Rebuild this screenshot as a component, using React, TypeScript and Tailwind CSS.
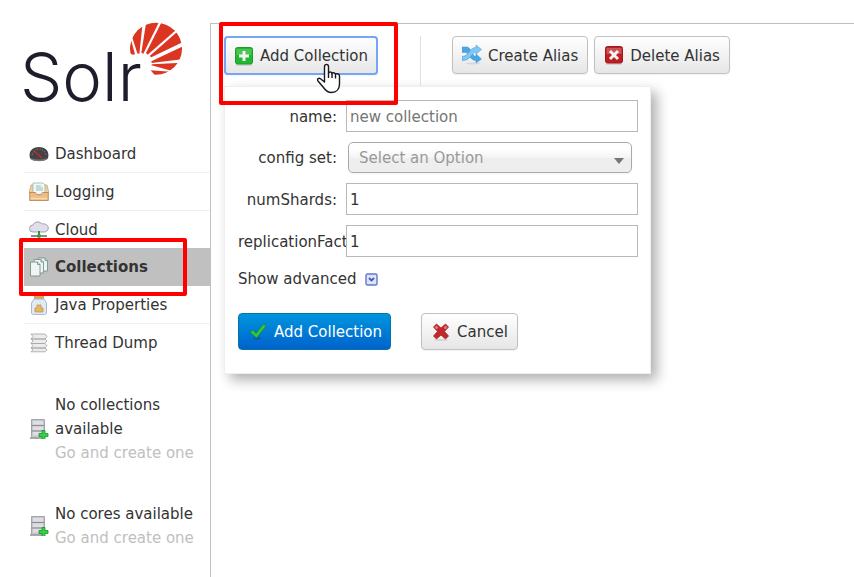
import type { ReactNode } from "react";

const font = "font-['DejaVu_Sans',Verdana,sans-serif]";

function Logo() {
  return (
    <a href="#home" aria-label="Solr" className="relative block h-24 text-[#1f1d2b]">
      <span className="-ml-1 block pt-[15px] font-['Inter',sans-serif] text-[67px] leading-[84px] font-light">Solr</span>
      <svg viewBox="0 0 180 180" className="absolute top-0 left-[102px] size-[60px]" aria-hidden="true">
        <clipPath id="disc">
          <circle cx="90" cy="86" r="78" />
        </clipPath>
        <g clipPath="url(#disc)" fill="#dc3522">
          <path d="M6 96 16 62 27 103 20 104Z" />
          <path d="M18 50 50 8 40 102 34 100Z" />
          <path d="M61 4 100 4 52 101 46 98Z" />
          <path d="M110 0 150 30 65 104 60 99Z" />
          <path d="M152 37 175 64 76 112 71 108Z" />
          <path d="M175 77 175 117 77 129 76 124Z" />
          <path d="M175 128 136 152 76 136 78 133Z" />
          <path d="M74 151 134 155 110 175 90 170Z" />
        </g>
      </svg>
    </a>
  );
}

function DashboardIcon() {
  return (
    <svg viewBox="0 0 20 20" className="size-5" aria-hidden="true">
      <path d="M1 14C-1 7 4 3 10 3s11 4 9 11c-1 4-17 4-18 0Z" fill="#434345" />
      <path d="M3 11c1-4 4-6 7-6s6 2 7 6" stroke="#8a8a8a" strokeWidth="1" strokeDasharray="1 1.6" fill="none" />
      <path d="M2 14c4 2 12 2 16 0v1c-3 3-13 3-16 0Z" fill="#77777a" />
      <path d="m5 7 8 7" stroke="#d2222a" strokeWidth="1.4" />
    </svg>
  );
}

function LoggingIcon() {
  return (
    <svg viewBox="0 0 20 20" className="size-5" aria-hidden="true">
      <path d="M2 3h16l2 8H0Z" fill="#efd0a3" stroke="#c99a63" strokeWidth=".7" />
      <path d="M4 1h10l2 2v10H4Z" fill="#f2f8f8" stroke="#97b5b8" strokeWidth=".8" />
      <path d="M7 4h5M7 6h7M7 8h7" stroke="#9bb9b4" />
      <path d="M.7 10.500h5.800c.5 3 6.500 3 7 0h5.800v8H.7Z" fill="#edbd85" stroke="#bf8852" strokeWidth=".9" />
      <path d="M2 16.500h16" stroke="#f8dbb4" strokeWidth="1.500" />
    </svg>
  );
}

function CloudIcon() {
  return (
    <svg viewBox="0 0 20 20" className="size-5" aria-hidden="true">
      <path d="M4 12a3.500 3.500 0 0 1 0-7 5 4.500 0 0 1 9-1 4 3.500 0 0 1 3 8Z" fill="#dfdfec" stroke="#9696aa" strokeWidth=".9" />
      <path d="M10 11v4" stroke="#3b8f41" strokeWidth="2" />
      <path d="M2 16h16" stroke="#8b8b94" strokeWidth="2" />
      <circle cx="10" cy="16" r="2" fill="#27a83a" />
    </svg>
  );
}

function CollectionsIcon() {
  return (
    <svg viewBox="0 0 20 20" className="size-5" fill="#eef5f2" stroke="#78938d" strokeWidth=".9" aria-hidden="true">
      <path d="M9 1h7l2.500 2.500V14H9Z" />
      <path d="M5 2.500h7L14.500 5v11H5Z" />
      <path d="M1.500 5h7L11 7.500V19H1.500Z" />
      <path d="M8.500 5v2.500H11M12 2.500V5h2.500M16 1v2.500h2.500" fill="#c9dcd5" />
    </svg>
  );
}

function JarIcon() {
  return (
    <svg viewBox="0 0 20 20" className="size-5" aria-hidden="true">
      <path d="M5 0h10v4H5Z" fill="#e5a354" />
      <path d="M5 4h10l2.500 4v10c0 1-1 1.500-2 1.500h-11c-1 0-2-.5-2-1.500V8Z" fill="#dfeaf4" stroke="#9fb5cb" strokeWidth=".9" />
      <path d="M6 17v-4h2v-3h4v3h2v4Z" fill="#e5b768" stroke="#c58c3a" strokeWidth=".7" />
    </svg>
  );
}

function ThreadIcon() {
  return (
    <svg viewBox="0 0 20 20" className="size-5" fill="#ececec" stroke="#aaaaaa" strokeWidth=".9" aria-hidden="true">
      <path d="M2 1h14l2 2.500L16 6H2l2-2.500ZM2 6h14l2 2L16 10.500H2L4 8ZM2 10.500h14l2 2-2 2.500H2l2-2.500ZM2 15h14l2 1.800-2 2H2l2-2Z" />
    </svg>
  );
}

function ServerIcon() {
  return (
    <svg viewBox="0 0 20 20" className="size-5 shrink-0" aria-hidden="true">
      <path d="M1 19h14" stroke="#8d8d8d" strokeWidth="1.500" />
      <path d="M2.500.5h13v18h-13Z" fill="#c6c6ca" stroke="#a6a6a6" />
      <path d="M4 2h10v3.500H4ZM4 7.500h10V11H4ZM4 13h10v3.500H4Z" fill="#dedee6" />
      <path d="M2.500 6.500h13M2.500 12h13" stroke="#8f8f8f" />
      <path d="M13 11.500h3v3h3v3h-3v3h-3v-3h-3v-3h3Z" fill="#33cf45" stroke="#16932a" strokeWidth=".8" />
    </svg>
  );
}

function PlusIcon() {
  return (
    <svg viewBox="0 0 20 20" className="size-5" aria-hidden="true">
      <path d="M2 19h16" stroke="#bbb" />
      <rect x="1.500" y="1.500" width="17" height="16.500" rx="2" fill="#1fb930" stroke="#1d9a2b" />
      <path d="M2.500 3h15v6h-15Z" fill="#4cc455" />
      <path d="M10 5v10M5 10h10" stroke="#f4f4f4" strokeWidth="3" />
    </svg>
  );
}

function ShuffleIcon() {
  return (
    <svg viewBox="0 0 20 20" className="size-5" aria-hidden="true">
      <ellipse cx="11" cy="18.500" rx="7" ry="1" fill="#d8d8d8" />
      <path d="M0 2h5c4 0 5 9.500 9 9.500V9l5.500 5-5.500 4v-2.500C8 15.500 6.500 7.500 3.500 7.500H0Z" fill="#4ba6e6" stroke="#3b90cf" strokeWidth=".5" />
      <path d="M0 15.500v-4C7 11.500 7 2.500 14 2.500V0l5.500 4.600L14 9V7c-4 0-5 9-14 8.500Z" fill="#7fc8f3" stroke="#3b90cf" strokeWidth=".5" />
    </svg>
  );
}

function DeleteIcon() {
  return (
    <svg viewBox="0 0 20 20" className="size-5" aria-hidden="true">
      <path d="M2 19h16" stroke="#bbb" />
      <rect x="1.500" y="1.500" width="17" height="16.500" rx="2" fill="#c01c22" stroke="#9c1a1e" />
      <path d="M2.500 3h15v6h-15Z" fill="#cf5052" />
      <path d="m6 6 8 8m0-8-8 8" stroke="#f4f4f4" strokeWidth="3" />
    </svg>
  );
}

function CheckIcon() {
  return (
    <svg viewBox="0 0 20 20" className="size-5" aria-hidden="true">
      <ellipse cx="9" cy="16.500" rx="4" ry="1.200" fill="#075aa4" />
      <path d="m2 10 3-2 3 3.500L15.500 2 18 4 8.500 16Z" fill="#34c542" stroke="#168b2c" strokeWidth=".8" />
    </svg>
  );
}

function CrossIcon() {
  return (
    <svg viewBox="0 0 20 20" className="size-5" aria-hidden="true">
      <ellipse cx="10" cy="18" rx="7" ry="1" fill="#d4d4d4" />
      <path d="m2.500 5 3-3L10 6l4.500-4 3 3-4 4.500 4 4.500-3 3-4.500-4-4.500 4-3-3 4-4.500Z" fill="#c3262b" stroke="#a1272b" strokeWidth=".8" />
      <path d="m4.500 4.500 2 2M15.500 4.500l-2 2" stroke="#e47375" strokeWidth="2.500" fill="none" />
    </svg>
  );
}

function HandCursor() {
  return (
    <svg viewBox="0 0 26 31" className="pointer-events-none absolute top-[27px] left-[92px] h-[31px] w-[26px]" aria-hidden="true">
      <path
        d="M8.500 19V4c0-3.500 4-3.500 4 0v6.500c0-2 3.500-2 3.500.5 0-2 3.500-1.500 3.500.8 0-1.800 4-1.300 4 1.200v8c0 5-3 8.500-8 8.500-4 0-6-2-8-5l-5.500-6.500C.5 16 3 14.500 4.800 16Z"
        fill="#fff"
        stroke="#17171f"
        strokeWidth="1.400"
        strokeLinejoin="round"
      />
      <path d="M12.500 10v5M16 11v4M19.500 12v3.500" stroke="#17171f" strokeWidth="1.400" />
    </svg>
  );
}

const navItems: { label: string; icon: ReactNode; current?: boolean }[] = [
  { label: "Dashboard", icon: <DashboardIcon /> },
  { label: "Logging", icon: <LoggingIcon /> },
  { label: "Cloud", icon: <CloudIcon /> },
  { label: "Collections", icon: <CollectionsIcon />, current: true },
  { label: "Java Properties", icon: <JarIcon /> },
  { label: "Thread Dump", icon: <ThreadIcon /> },
];

function Notice({ title }: { title: string }) {
  return (
    <div className="flex items-center gap-1.5 pl-[5px] leading-6">
      <ServerIcon />
      <p>
        {title}
        <a href="#create" className="block text-[#c0c0c0]">
          Go and create one
        </a>
      </p>
    </div>
  );
}

function Button({ icon, children, className = "" }: { icon: ReactNode; children: ReactNode; className?: string }) {
  return (
    <button
      type="button"
      className={`flex items-center gap-1.5 rounded border border-[#c0c0c0] bg-linear-to-b from-white to-[#e6e6e6] px-[9px] whitespace-nowrap shadow-xs ${className}`}
    >
      {icon}
      <span className="pt-0.5">{children}</span>
    </button>
  );
}

const fieldLabel = "w-[108px] shrink-0 pt-0.5 pr-[9px] text-right whitespace-nowrap";
const fieldInput =
  "relative h-8 min-w-0 flex-1 border border-[#b8b8b8] bg-white px-[3px] pt-0.5 outline-none placeholder:text-[#757575]";

function AddCollectionForm() {
  return (
    <form className="w-[427px] border border-[#eeeeee] bg-white pt-[13px] pr-3 pb-[23px] pl-[13px] shadow-[6px_6px_12px_#b0b0b0]">
      <div className="flex flex-col gap-2.5">
        <div className="flex items-center">
          <label htmlFor="name" className={fieldLabel}>name:</label>
          <input id="name" placeholder="new collection" className={fieldInput} />
        </div>
        <div className="flex items-center">
          <label htmlFor="config" className={fieldLabel}>config set:</label>
          <div className="relative flex-1 pr-1.5 pl-0.5">
            <select
              id="config"
              className="block h-[31px] w-full appearance-none rounded-[5px] border border-[#aaaaaa] bg-linear-to-b from-white from-20% via-[#f4f4f4] via-50% to-[#eeeeee] to-52% pt-0.5 pl-2.5 text-[#999999] shadow-xs outline-none"
            >
              <option>Select an Option</option>
            </select>
            <span className="pointer-events-none absolute top-4 right-3.5 border-x-[5px] border-t-[6px] border-x-transparent border-t-[#777777]" />
          </div>
        </div>
        <div className="flex items-center">
          <label htmlFor="shards" className={fieldLabel}>numShards:</label>
          <input id="shards" defaultValue="1" className={fieldInput} />
        </div>
        <div className="flex items-center">
          <label htmlFor="replicas" className={fieldLabel}>replicationFactor:</label>
          <input id="replicas" defaultValue="1" className={fieldInput} />
        </div>
        <a href="#advanced" className="flex items-center gap-2 leading-6">
          Show advanced
          <svg viewBox="0 0 13 13" className="size-[13px]" aria-hidden="true">
            <rect x="1" y="1" width="11" height="11" rx="1.500" fill="#dde3fa" stroke="#6677cc" strokeWidth="1.400" />
            <path d="m4 5 2.500 2.500L9 5" stroke="#4a59b0" fill="none" strokeWidth="1.800" />
          </svg>
        </a>
      </div>
      <div className="mt-[22px] flex gap-[30px]">
        <button
          type="button"
          className="flex h-[37px] items-center gap-1.5 rounded border border-[#0076a3] bg-linear-to-b from-[#0095dd] to-[#0062cc] pr-2 pl-[9px] whitespace-nowrap text-white"
        >
          <CheckIcon />
          <span className="pt-0.5">Add Collection</span>
        </button>
        <Button icon={<CrossIcon />} className="h-[37px]">Cancel</Button>
      </div>
    </form>
  );
}

export default function App() {
  return (
    <div className={`flex min-h-screen bg-white text-[15px] text-[#333333] ${font}`}>
      <aside className="w-[210px] shrink-0 pt-5 pl-6">
        <Logo />
        <nav className="mt-[19px]">
          {navItems.map((item) => (
            <div key={item.label} className={item.current ? "relative -mt-px" : ""}>
              <a
                href="#nav"
                className={`flex h-[38px] items-center gap-1.5 border-b pl-[5px] ${
                  item.current
                    ? "border-[#c0c0c0] bg-[#c0c0c0] font-bold"
                    : item.label === "Thread Dump"
                      ? "border-transparent"
                      : "border-[#f0f0f0]"
                }`}
              >
                {item.icon}
                <span className="pt-0.5">{item.label}</span>
              </a>
              {item.current && (
                <span className="pointer-events-none absolute -inset-y-2.5 right-[23px] -left-[5px] z-10 rounded-xs border-4 border-[#ff0000]" />
              )}
            </div>
          ))}
        </nav>
        <div className="mt-[31px] flex flex-col gap-[37px]">
          <Notice title="No collections available" />
          <Notice title="No cores available" />
        </div>
      </aside>
      <main className="mt-[23px] min-w-0 flex-1 border-t border-l border-[#c0c0c0] pt-3 pl-[13px]">
        <div className="flex h-[50px] items-start">
          <div className="relative z-10">
            <Button icon={<PlusIcon />} className="h-[39px] outline-2 -outline-offset-2 outline-[#73a7f5]">
              Add Collection
            </Button>
            <span className="pointer-events-none absolute -top-3.5 -right-5 -bottom-[30px] -left-[5px] rounded-xs border-4 border-[#ff0000]" />
            <HandCursor />
          </div>
          <div className="ml-[42px] h-full border-l border-[#e0e0e0]" />
          <div className="ml-[31px] flex gap-1.5">
            <Button icon={<ShuffleIcon />} className="h-[38px]">Create Alias</Button>
            <Button icon={<DeleteIcon />} className="h-[38px]">Delete Alias</Button>
          </div>
        </div>
        <AddCollectionForm />
      </main>
    </div>
  );
}
